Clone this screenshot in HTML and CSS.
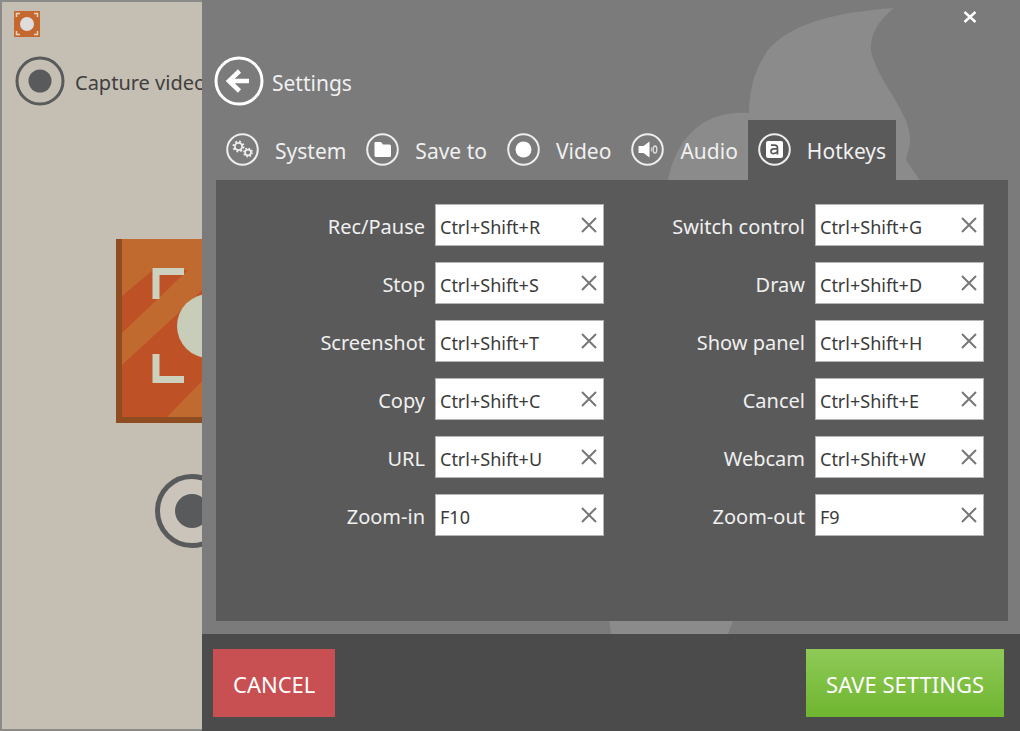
FILE: index.html
```html
<!DOCTYPE html>
<html lang="en">
<head>
    <meta charset="UTF-8">
    <meta name="viewport" content="width=device-width, initial-scale=1.0">
    <title>Settings</title>
    <link rel="stylesheet" href="styles.css">
</head>
<body>
    <div class="window">
        <aside class="home">
            <svg class="app-icon" width="26" height="26" viewBox="0 0 26 26">
                <rect width="26" height="26" fill="#c4682f"/>
                <path d="M2.500 6V2.500H6M20 2.500h3.500V6M23.500 20v3.500H20M6 23.500H2.500V20" fill="none" stroke="#e6d3c4" stroke-width="1.500"/>
                <circle cx="13" cy="13" r="7" fill="#dfdcdd"/>
            </svg>

            <button class="capture" type="button">
                <svg width="50" height="50" viewBox="0 0 50 50">
                    <circle cx="25" cy="25" r="23" fill="none" stroke="#595a5b" stroke-width="3"/>
                    <circle cx="25" cy="25" r="11.500" fill="#595a5b"/>
                </svg>
                <span>Capture video</span>
            </button>

            <svg class="logo" width="184" height="184" viewBox="0 0 184 184">
                <rect width="184" height="184" fill="#8f4c20"/>
                <rect x="6" width="178" height="178" fill="#c06a30"/>
                <path d="M6 57L37 31H72L6 94z" fill="#bf5127"/>
                <path d="M6 126L70 67L137 0H184V29L86 142L51 178H6z" fill="#bf5127"/>
                <path d="M40 60V32.500H68M40 115V140.500H68M144 60V32.500H116M144 115V140.500H116" fill="none" stroke="#cdd0bd" stroke-width="7"/>
                <circle cx="93" cy="87" r="32" fill="#c7cdb8"/>
            </svg>

            <button class="record" type="button" aria-label="Record">
                <svg width="74" height="74" viewBox="0 0 74 74">
                    <circle cx="37" cy="37" r="34.500" fill="#cbc4ba" stroke="#595a5b" stroke-width="5"/>
                    <circle cx="37" cy="37" r="17" fill="#595a5b"/>
                </svg>
            </button>
        </aside>

        <main class="settings">
            <!-- Mascot silhouette behind the panel -->
            <svg class="mascot" width="340" height="634" viewBox="600 0 340 634">
                <path d="M668 180C676 141 700 110 749 113C750 82 757 66 768 50C790 24 835 12 894 8C874 24 867 42 873 58C884 90 912 115 910 143C909 150 907 154 906 160L921 182V400L733 621L728 634H611L608 610z"/>
            </svg>

            <button class="close" type="button" aria-label="Close">
                <svg width="14" height="14" viewBox="0 0 14 14">
                    <path d="M1.500 2L12.500 12M12.500 2L1.500 12" fill="none" stroke="#fff" stroke-width="2.400"/>
                </svg>
            </button>

            <header class="title">
                <button class="back" type="button" aria-label="Back">
                    <svg width="50" height="50" viewBox="0 0 50 50" fill="none" stroke="#fff">
                        <circle cx="25" cy="25" r="23" stroke-width="3"/>
                        <path d="M35 25H15M25.500 15L15 25L25.500 35" stroke-width="4.500"/>
                    </svg>
                </button>
                <h1>Settings</h1>
            </header>

            <div class="tabs" role="tablist">
                <button class="tab" type="button" role="tab">
                    <svg width="33" height="33" viewBox="0 1 33 33" fill="none" stroke="#eee">
                        <circle cx="16.500" cy="16.500" r="15.300" stroke-width="2"/>
                        <circle cx="12.500" cy="13.500" r="3.600" stroke-width="1.800"/>
                        <circle cx="12.500" cy="13.500" r="5" stroke-width="2" stroke-dasharray="1.900 2.027"/>
                        <circle cx="22" cy="19.500" r="2.900" stroke-width="1.700"/>
                        <circle cx="22" cy="19.500" r="4.100" stroke-width="1.600" stroke-dasharray="1.600 1.620"/>
                    </svg>
                    <span>System</span>
                </button>
                <button class="tab" type="button" role="tab">
                    <svg width="33" height="33" viewBox="0 1 33 33">
                        <circle cx="16.500" cy="16.500" r="15.300" fill="none" stroke="#eee" stroke-width="2"/>
                        <path d="M8.500 10Q8.500 9 9.500 9H15L17 11.500H23.500Q25 11.500 25 13V22.500Q25 24 23.500 24H10Q8.500 24 8.500 22.500z" fill="#fff"/>
                    </svg>
                    <span>Save to</span>
                </button>
                <button class="tab" type="button" role="tab">
                    <svg width="33" height="33" viewBox="0 1 33 33">
                        <circle cx="16.500" cy="16.500" r="15.300" fill="none" stroke="#eee" stroke-width="2"/>
                        <circle cx="16.500" cy="16.500" r="8" fill="#fff"/>
                    </svg>
                    <span>Video</span>
                </button>
                <button class="tab" type="button" role="tab">
                    <svg width="33" height="33" viewBox="0 1 33 33">
                        <circle cx="16.500" cy="16.500" r="15.300" fill="none" stroke="#eee" stroke-width="2"/>
                        <path d="M7.500 13H12.500L18.500 8.500V24.500L12.500 20H7.500z" fill="#fff"/>
                        <path d="M20.500 14.500V18.500" fill="none" stroke="#ccc" stroke-width="1.200"/>
                        <ellipse cx="24" cy="16.500" rx="1.800" ry="3.500" fill="none" stroke="#ddd" stroke-width="1.400"/>
                    </svg>
                    <span>Audio</span>
                </button>
                <button class="tab active" type="button" role="tab" aria-selected="true">
                    <svg width="33" height="33" viewBox="0 1 33 33">
                        <circle cx="16.500" cy="16.500" r="15.300" fill="none" stroke="#eee" stroke-width="2"/>
                        <rect x="8" y="8" width="17" height="17" rx="2" fill="#fff"/>
                        <path d="M13 12.200H16.500Q19.500 12.200 19.500 15V21.500M19.500 15.800H16Q13 15.800 13 18.200T15.500 20.600Q18 20.600 19.500 18.500" fill="none" stroke="#5a5a5a" stroke-width="1.700"/>
                    </svg>
                    <span>Hotkeys</span>
                </button>
            </div>

            <form class="panel" id="hotkeys">
                <div class="field">
                    <label for="rec">Rec/Pause</label>
                    <div class="box">
                        <input id="rec" type="text" value="Ctrl+Shift+R">
                        <button class="clear" type="button" aria-label="Clear"><svg width="16" height="16" viewBox="0 0 16 16"><path d="M1 1L15 15M15 1L1 15"/></svg></button>
                    </div>
                </div>
                <div class="field">
                    <label for="switch">Switch control</label>
                    <div class="box">
                        <input id="switch" type="text" value="Ctrl+Shift+G">
                        <button class="clear" type="button" aria-label="Clear"><svg width="16" height="16" viewBox="0 0 16 16"><path d="M1 1L15 15M15 1L1 15"/></svg></button>
                    </div>
                </div>
                <div class="field">
                    <label for="stop">Stop</label>
                    <div class="box">
                        <input id="stop" type="text" value="Ctrl+Shift+S">
                        <button class="clear" type="button" aria-label="Clear"><svg width="16" height="16" viewBox="0 0 16 16"><path d="M1 1L15 15M15 1L1 15"/></svg></button>
                    </div>
                </div>
                <div class="field">
                    <label for="draw">Draw</label>
                    <div class="box">
                        <input id="draw" type="text" value="Ctrl+Shift+D">
                        <button class="clear" type="button" aria-label="Clear"><svg width="16" height="16" viewBox="0 0 16 16"><path d="M1 1L15 15M15 1L1 15"/></svg></button>
                    </div>
                </div>
                <div class="field">
                    <label for="screenshot">Screenshot</label>
                    <div class="box">
                        <input id="screenshot" type="text" value="Ctrl+Shift+T">
                        <button class="clear" type="button" aria-label="Clear"><svg width="16" height="16" viewBox="0 0 16 16"><path d="M1 1L15 15M15 1L1 15"/></svg></button>
                    </div>
                </div>
                <div class="field">
                    <label for="show">Show panel</label>
                    <div class="box">
                        <input id="show" type="text" value="Ctrl+Shift+H">
                        <button class="clear" type="button" aria-label="Clear"><svg width="16" height="16" viewBox="0 0 16 16"><path d="M1 1L15 15M15 1L1 15"/></svg></button>
                    </div>
                </div>
                <div class="field">
                    <label for="copy">Copy</label>
                    <div class="box">
                        <input id="copy" type="text" value="Ctrl+Shift+C">
                        <button class="clear" type="button" aria-label="Clear"><svg width="16" height="16" viewBox="0 0 16 16"><path d="M1 1L15 15M15 1L1 15"/></svg></button>
                    </div>
                </div>
                <div class="field">
                    <label for="cancel">Cancel</label>
                    <div class="box">
                        <input id="cancel" type="text" value="Ctrl+Shift+E">
                        <button class="clear" type="button" aria-label="Clear"><svg width="16" height="16" viewBox="0 0 16 16"><path d="M1 1L15 15M15 1L1 15"/></svg></button>
                    </div>
                </div>
                <div class="field">
                    <label for="url">URL</label>
                    <div class="box">
                        <input id="url" type="text" value="Ctrl+Shift+U">
                        <button class="clear" type="button" aria-label="Clear"><svg width="16" height="16" viewBox="0 0 16 16"><path d="M1 1L15 15M15 1L1 15"/></svg></button>
                    </div>
                </div>
                <div class="field">
                    <label for="webcam">Webcam</label>
                    <div class="box">
                        <input id="webcam" type="text" value="Ctrl+Shift+W">
                        <button class="clear" type="button" aria-label="Clear"><svg width="16" height="16" viewBox="0 0 16 16"><path d="M1 1L15 15M15 1L1 15"/></svg></button>
                    </div>
                </div>
                <div class="field">
                    <label for="zoomin">Zoom-in</label>
                    <div class="box">
                        <input id="zoomin" type="text" value="F10">
                        <button class="clear" type="button" aria-label="Clear"><svg width="16" height="16" viewBox="0 0 16 16"><path d="M1 1L15 15M15 1L1 15"/></svg></button>
                    </div>
                </div>
                <div class="field">
                    <label for="zoomout">Zoom-out</label>
                    <div class="box">
                        <input id="zoomout" type="text" value="F9">
                        <button class="clear" type="button" aria-label="Clear"><svg width="16" height="16" viewBox="0 0 16 16"><path d="M1 1L15 15M15 1L1 15"/></svg></button>
                    </div>
                </div>
            </form>

            <footer class="actions">
                <button class="btn btn-cancel" type="button">CANCEL</button>
                <button class="btn btn-save" type="submit" form="hotkeys">SAVE SETTINGS</button>
            </footer>
        </main>
    </div>

    <script>
        // Clear a hotkey field
        document.querySelectorAll('.clear').forEach(function(btn) {
            btn.addEventListener('click', function() {
                btn.previousElementSibling.value = '';
            });
        });
    </script>
</body>
</html>
```
FILE: styles.css
```css
:root {
    --sand: #c5beb3;
    --gray: #7b7b7b;
    --panel: #5a5a5a;
    --dark: #4b4b4b;
    --light: #f0f0f0;
}

* {
    box-sizing: border-box;
}

body {
    margin: 0;
    font-family: "Noto Sans", "Open Sans", sans-serif;
    font-size: 21px;
    line-height: 28px;
}

button {
    border: none;
    padding: 0;
    background: none;
    color: inherit;
    font: inherit;
    cursor: pointer;
}

svg {
    display: block;
    flex: none;
}

.window {
    display: flex;
    min-height: 100vh;
}

/* Home screen, partly covered by the settings */
.home {
    flex: 0 0 202px;
    display: flex;
    flex-direction: column;
    align-items: flex-start;
    overflow: hidden;
    background-color: var(--sand);
    border: 2px solid #8a8a88;
    border-right: none;
}

.app-icon {
    margin: 9px 12px 19px;
}

.capture {
    display: flex;
    align-items: center;
    gap: 10px;
    margin-left: 13px;
    color: #3f3f3f;
    font-size: 20px;
    white-space: nowrap;
}

.capture span,
.title h1 {
    padding-top: 4px;
}

.logo {
    margin: 133px 0 51px 114px;
}

.record {
    margin-left: 153px;
}

.settings {
    flex: 1;
    min-width: 0;
    display: flex;
    flex-direction: column;
    position: relative;
    background-color: var(--gray);
    color: var(--light);
}

.mascot {
    position: absolute;
    top: 0;
    right: 80px;
    fill: #8b8b8b;
}

.close {
    align-self: flex-end;
    margin: 10px 43px 0 0;
}

.title {
    display: flex;
    align-items: center;
    gap: 8px;
    margin: 32px 12px 0;
}

.title h1 {
    margin: 0;
    font-size: 21px;
    font-weight: 400;
}

.tabs {
    position: relative;
    display: flex;
    margin: 14px 12px 0 14px;
}

.tab {
    display: flex;
    align-items: center;
    gap: 16px;
    height: 60px;
    padding: 0 10px;
    white-space: nowrap;
}

.tab svg {
    overflow: visible;
}

.tab span {
    padding-top: 2px;
}

.tab.active {
    background-color: var(--panel);
}

.panel {
    position: relative;
    flex: 1;
    display: grid;
    grid-template-columns: 1fr 1fr;
    align-content: start;
    row-gap: 16px;
    margin: 0 12px 13px 14px;
    padding: 24px 24px 24px 8px;
    background-color: var(--panel);
}

.field {
    display: flex;
    justify-content: flex-end;
    align-items: center;
    gap: 10px;
    font-size: 20px;
}

.field label {
    padding-top: 4px;
}

.box {
    display: flex;
    align-items: center;
    width: 169px;
    height: 42px;
    padding: 0 6px 0 4px;
    background-color: #fff;
    border: 1px solid #b4b4b4;
}

.box input {
    flex: 1;
    min-width: 0;
    height: 32px;
    padding: 4px 0 0;
    border: none;
    outline: none;
    background: none;
    color: #3a3a3a;
    font: 18px/28px "Noto Sans", "Open Sans", sans-serif;
}

.clear svg {
    fill: none;
    stroke: #777;
    stroke-width: 2;
}

.actions {
    position: relative;
    display: flex;
    justify-content: space-between;
    padding: 15px 16px 14px 11px;
    background-color: var(--dark);
}

.btn {
    height: 68px;
    padding: 2px 20px 0;
    color: #fff;
    font-size: 22px;
}

.btn-cancel {
    background-color: #c84f52;
}

.btn-save {
    background: linear-gradient(#8fca58, #6fb52f);
}
```
